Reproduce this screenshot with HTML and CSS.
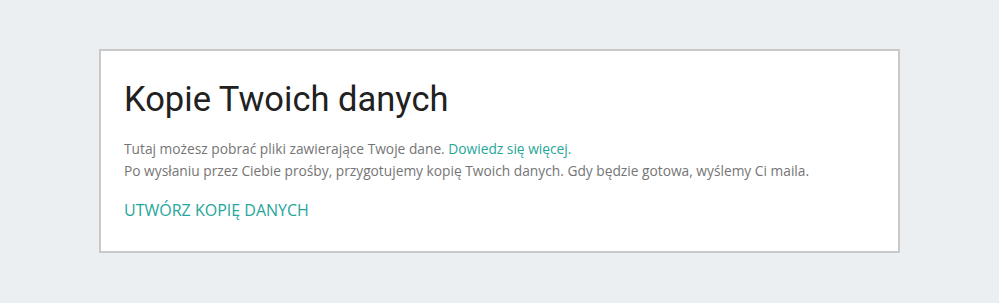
FILE: index.html
```html
<!DOCTYPE html>
<html lang="pl">
<head>
  <meta charset="UTF-8">
  <meta name="viewport" content="width=device-width, initial-scale=1.0">
  <title>Kopie Twoich danych</title>
  <link rel="stylesheet" href="styles.css">
</head>
<body>
  <div class="card">
    <h1>Kopie Twoich danych</h1>
    <p class="info">
      Tutaj możesz pobrać pliki zawierające Twoje dane. <a href="#" class="link">Dowiedz się więcej.</a><br>
      Po wysłaniu przez Ciebie prośby, przygotujemy kopię Twoich danych. Gdy będzie gotowa, wyślemy Ci maila.
    </p>
    <a href="#" class="action">Utwórz kopię danych</a>
  </div>
</body>
</html>
```

FILE: styles.css
```css
body {
  margin: 0;
  padding: 49px 0;
  background: #eceff1;
  font-family: 'Open Sans', sans-serif;
}
.card {
  box-sizing: border-box;
  width: 801px;
  height: 204px;
  margin: 0 auto;
  background: white;
  border: 2px solid #c9c9c9;
  padding: 27px 23px;
}
h1 {
  font-family: Roboto, sans-serif;
  font-weight: 400;
  font-size: 34.5px;
  color: #212121;
  margin: 0 0 18px;
  line-height: 42px;
}
.info {
  font-size: 13.75px;
  line-height: 22px;
  color: #757575;
  margin: 0 0 17px;
}
.link {
  color: #26a69a;
  text-decoration: none;
}
.action {
  display: inline-block;
  font-size: 16px;
  color: #26a69a;
  text-decoration: none;
  text-transform: uppercase;
}
```
